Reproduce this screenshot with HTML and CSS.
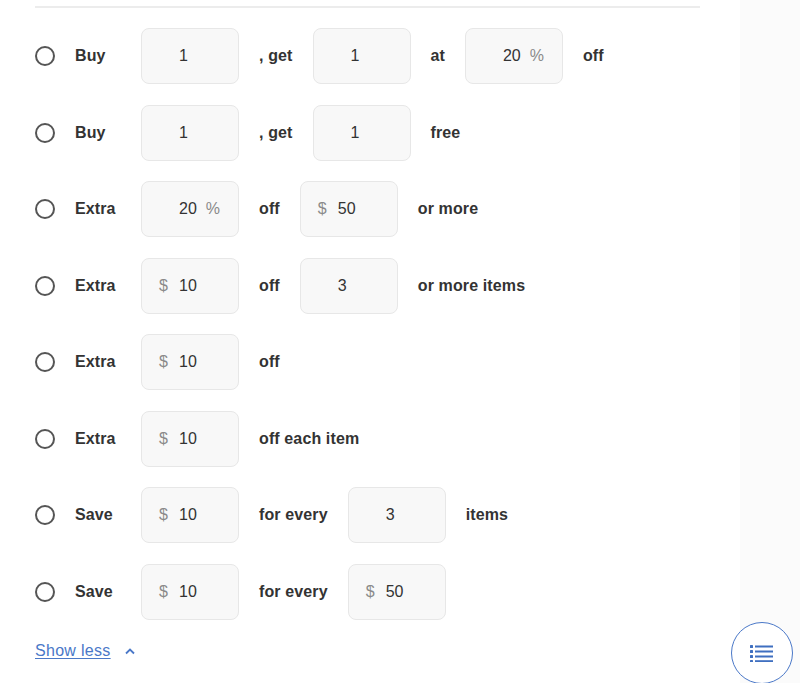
FILE: index.html
```html
<!DOCTYPE html>
<html>
<head>
<meta charset="utf-8">
<link rel="stylesheet" href="styles.css">
</head>
<body>
<div class="page">
  <main class="main">
    <hr class="divider">
    <div class="options">
      <div class="row">
        <span class="radio"></span><span class="label">Buy</span>
        <span class="field"><span class="num">1</span></span>
        <span class="text">, get</span>
        <span class="field"><span class="num">1</span></span>
        <span class="text">at</span>
        <span class="field"><span class="num">20</span><span class="suffix">%</span></span>
        <span class="text">off</span>
      </div>
      <div class="row">
        <span class="radio"></span><span class="label">Buy</span>
        <span class="field"><span class="num">1</span></span>
        <span class="text">, get</span>
        <span class="field"><span class="num">1</span></span>
        <span class="text">free</span>
      </div>
      <div class="row">
        <span class="radio"></span><span class="label">Extra</span>
        <span class="field"><span class="num">20</span><span class="suffix">%</span></span>
        <span class="text">off</span>
        <span class="field"><span class="prefix">$</span><span class="num">50</span></span>
        <span class="text">or more</span>
      </div>
      <div class="row">
        <span class="radio"></span><span class="label">Extra</span>
        <span class="field"><span class="prefix">$</span><span class="num">10</span></span>
        <span class="text">off</span>
        <span class="field"><span class="num">3</span></span>
        <span class="text">or more items</span>
      </div>
      <div class="row">
        <span class="radio"></span><span class="label">Extra</span>
        <span class="field"><span class="prefix">$</span><span class="num">10</span></span>
        <span class="text">off</span>
      </div>
      <div class="row">
        <span class="radio"></span><span class="label">Extra</span>
        <span class="field"><span class="prefix">$</span><span class="num">10</span></span>
        <span class="text">off each item</span>
      </div>
      <div class="row">
        <span class="radio"></span><span class="label">Save</span>
        <span class="field"><span class="prefix">$</span><span class="num">10</span></span>
        <span class="text">for every</span>
        <span class="field"><span class="num">3</span></span>
        <span class="text">items</span>
      </div>
      <div class="row">
        <span class="radio"></span><span class="label">Save</span>
        <span class="field"><span class="prefix">$</span><span class="num">10</span></span>
        <span class="text">for every</span>
        <span class="field"><span class="prefix">$</span><span class="num">50</span></span>
      </div>
    </div>
    <a class="show-less" href="#">Show less</a><svg class="chevron" width="12" height="8" viewBox="0 0 12 8"><path d="M2 6.5 L6 2.5 L10 6.5" fill="none" stroke="#4a78c8" stroke-width="1.8"/></svg>
  </main>
  <aside class="side"></aside>
</div>
<button class="fab" aria-label="List">
  <svg width="24" height="18" viewBox="0 0 24 18">
    <g fill="#3f6fc0">
      <rect x="0" y="1" width="3" height="3" rx="0.5"/>
      <rect x="0" y="6" width="3" height="3" rx="0.5"/>
      <rect x="0" y="11" width="3" height="3" rx="0.5"/>
      <rect x="0" y="16" width="3" height="2.5" rx="0.5"/>
      <rect x="5" y="1.5" width="18" height="2"/>
      <rect x="5" y="6.5" width="18" height="2"/>
      <rect x="5" y="11.5" width="18" height="2"/>
      <rect x="5" y="16.2" width="18" height="2"/>
    </g>
  </svg>
</button>
</body>
</html>
```

FILE: styles.css
```css
html, body {
  margin: 0;
  padding: 0;
  height: 683px;
  overflow: hidden;
  background: #ffffff;
  font-family: "Liberation Sans", Arial, sans-serif;
  color: #333333;
}

.page {
  display: flex;
  height: 683px;
}

.main {
  width: 665px;
  padding: 0 40px 0 35px;
  background: #ffffff;
}

.side {
  flex: 1;
  background: #fbfbfb;
}

.divider {
  border: 0;
  border-top: 2px solid #ececec;
  margin: 6px 0 0 0;
}

.options {
  display: flex;
  flex-direction: column;
  gap: 20.5px;
  margin-top: 20px;
}

.row {
  display: flex;
  align-items: center;
  height: 56px;
  gap: 20px;
  font-size: 16px;
}

.radio {
  width: 16px;
  height: 16px;
  border: 2px solid #555555;
  border-radius: 50%;
  flex: none;
}

.label {
  font-weight: bold;
  letter-spacing: 0.12px;
  width: 46px;
  flex: none;
}

.text {
  font-weight: bold;
  letter-spacing: 0.12px;
  color: #333333;
}

.field {
  box-sizing: border-box;
  width: 98px;
  height: 56px;
  flex: none;
  display: flex;
  align-items: center;
  position: relative;
  padding-left: 37px;
  background: #f8f8f8;
  border: 1px solid #e7e7e7;
  border-radius: 8px;
  color: #333333;
}

.prefix {
  position: absolute;
  left: 17px;
  color: #8a8a8a;
}

.suffix {
  margin-left: 9px;
  color: #8a8a8a;
}

.show-less {
  display: inline-block;
  margin-top: 22px;
  font-size: 16px;
  letter-spacing: 0.3px;
  color: #4a78c8;
  text-decoration: underline;
  text-underline-offset: 2px;
}

.chevron {
  margin-left: 13px;
  vertical-align: 1px;
}

.fab {
  position: absolute;
  left: 731px;
  top: 622px;
  width: 62px;
  height: 62px;
  border-radius: 50%;
  border: 1.5px solid #4a78c8;
  background: #ffffff;
  display: flex;
  align-items: center;
  justify-content: center;
  padding: 0;
}
```
